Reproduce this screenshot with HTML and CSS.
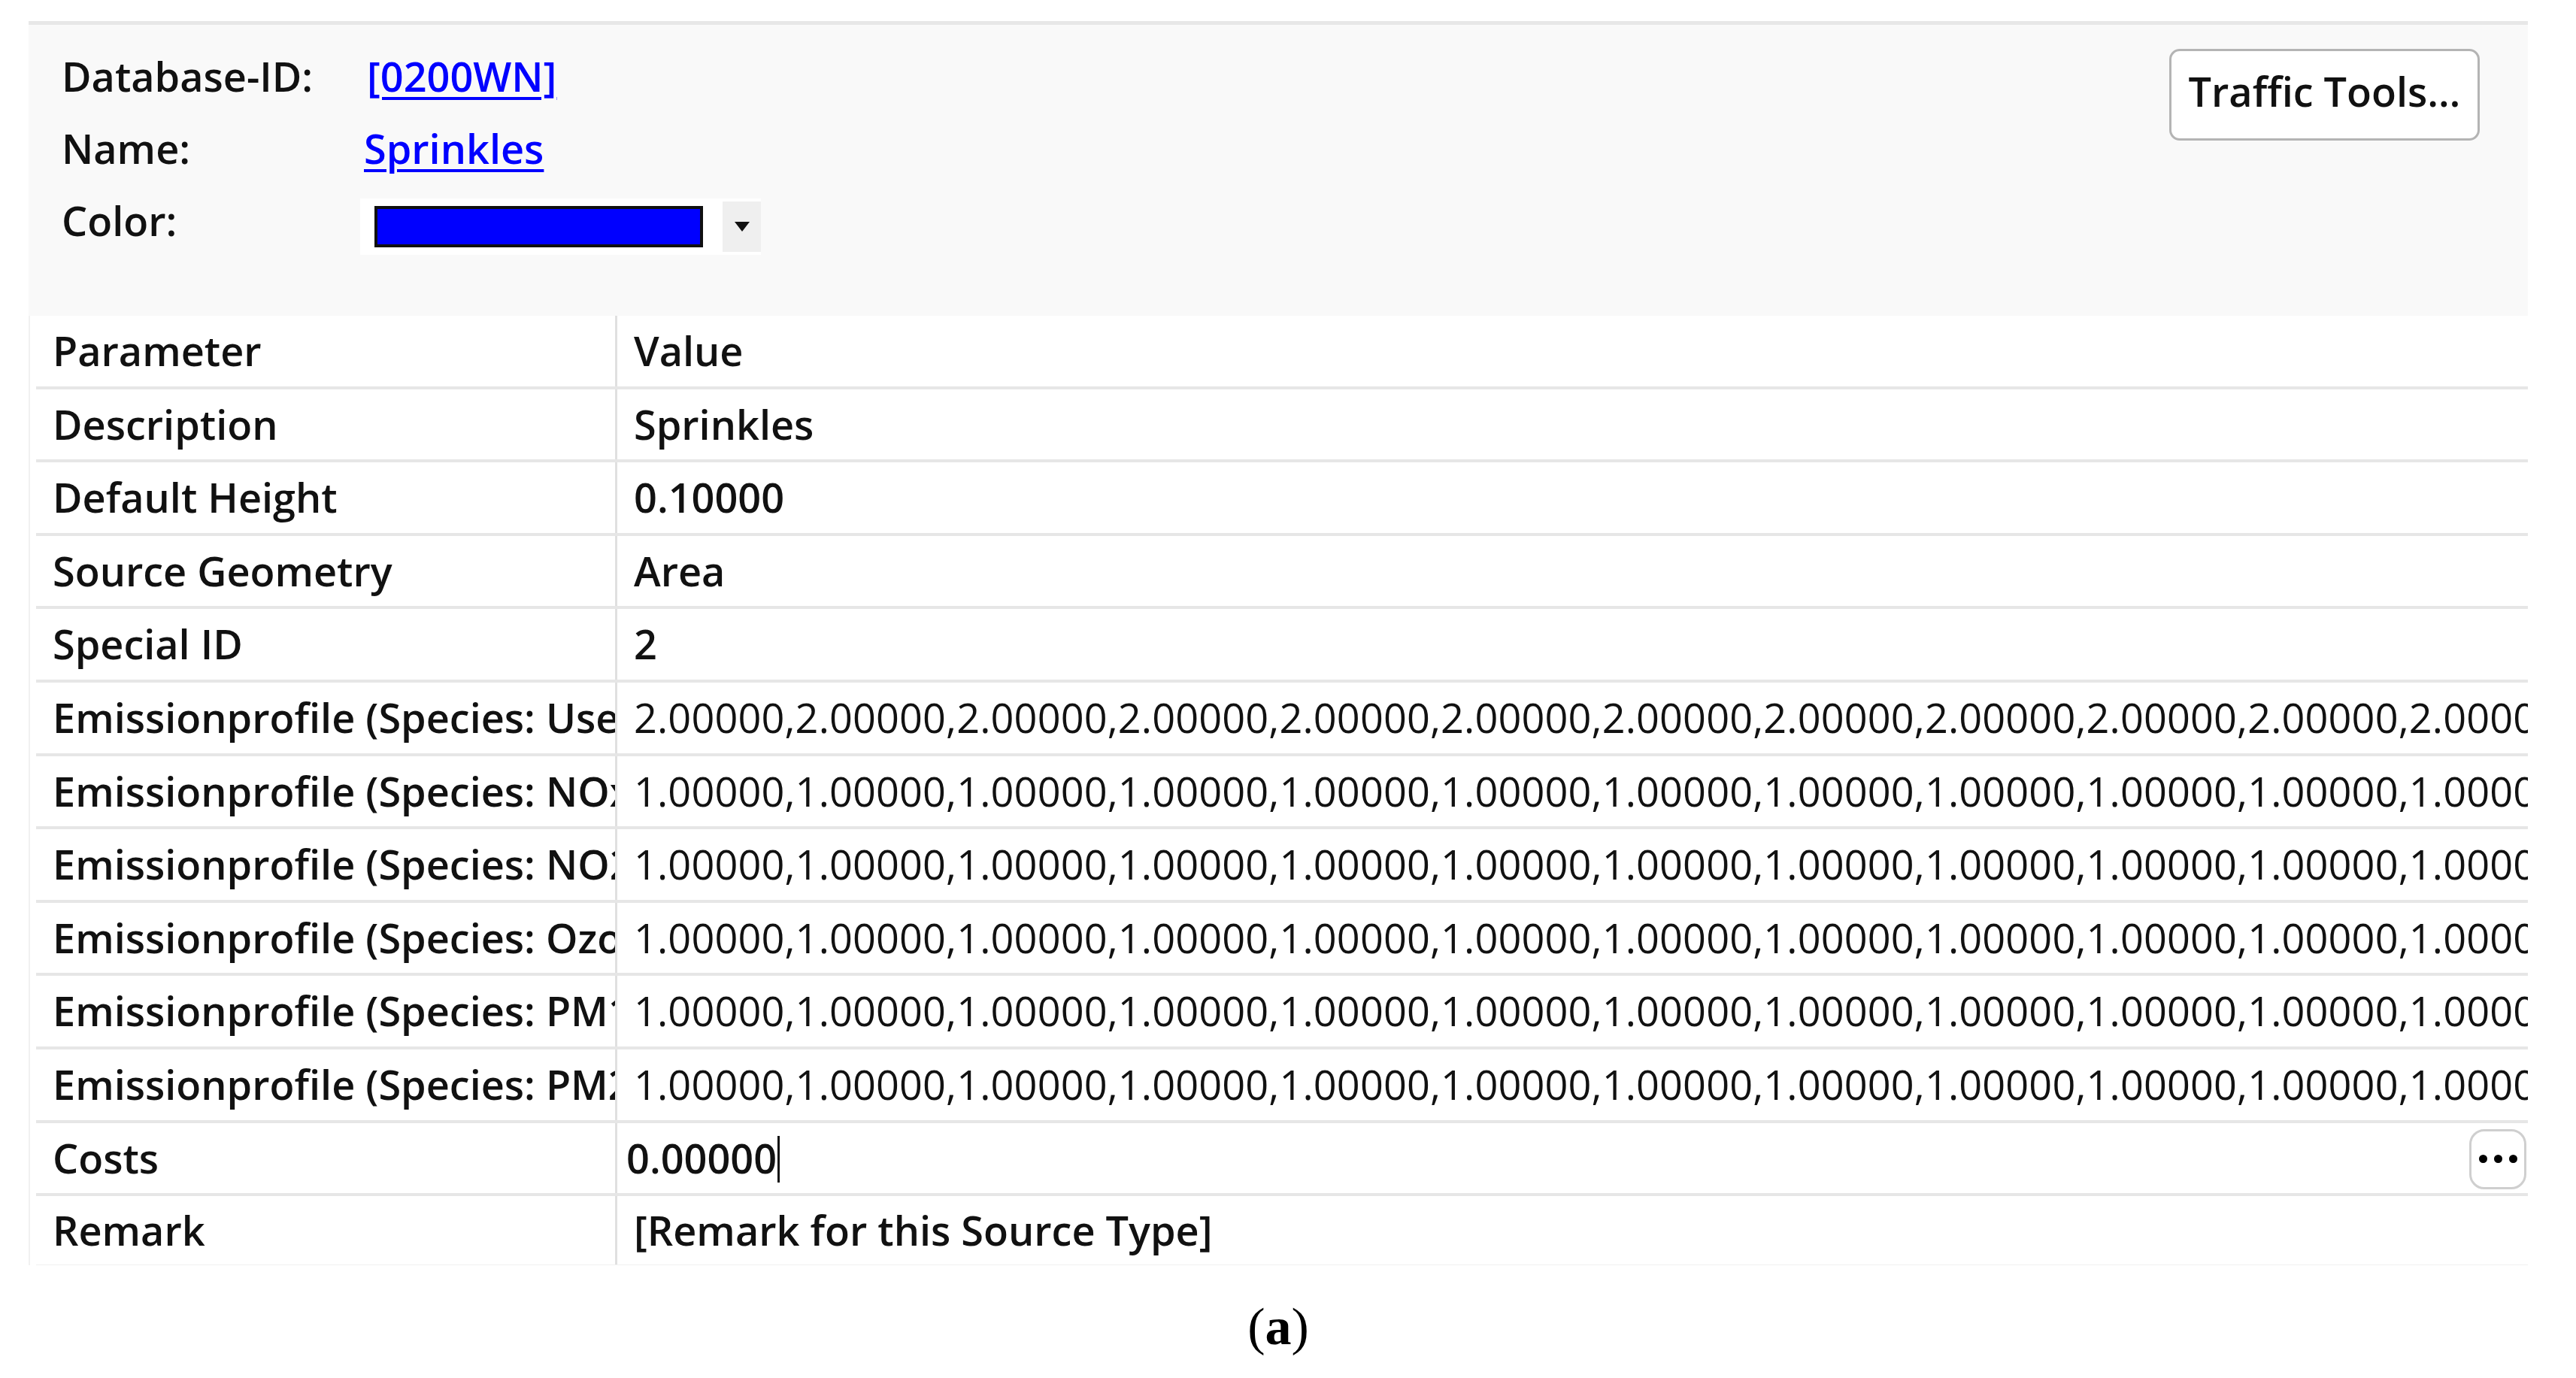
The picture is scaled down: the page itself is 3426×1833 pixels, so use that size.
FILE: index.html
```html
<!DOCTYPE html>
<html lang="en">
<head>
<meta charset="utf-8">
<title>Source Type</title>
<link rel="stylesheet" href="styles.css">
</head>
<body>
<div class="figure">
  <div class="panel">
    <div class="info">
      <div class="info-label">Database-ID:</div>
      <div class="info-value"><a class="link" href="#">[0200WN]</a></div>
      <div class="info-label">Name:</div>
      <div class="info-value"><a class="link link-name" href="#">Sprinkles</a></div>
      <div class="info-label">Color:</div>
      <div class="info-value">
        <div class="color-box">
          <div class="swatch"></div>
          <div class="drop">
            <svg width="20" height="13" viewBox="0 0 20 13"><path d="M0 0 H20 L10 13 Z" fill="#111"/></svg>
          </div>
        </div>
      </div>
    </div>
    <button class="traffic">Traffic Tools…</button>
  </div>

  <div class="table">
    <div class="row"><div class="key">Parameter</div><div class="val">Value</div></div>
    <div class="row"><div class="key">Description</div><div class="val">Sprinkles</div></div>
    <div class="row"><div class="key">Default Height</div><div class="val">0.10000</div></div>
    <div class="row"><div class="key">Source Geometry</div><div class="val">Area</div></div>
    <div class="row"><div class="key">Special ID</div><div class="val">2</div></div>
    <div class="row"><div class="key">Emissionprofile (Species: User defined)</div><div class="val num">2.00000,2.00000,2.00000,2.00000,2.00000,2.00000,2.00000,2.00000,2.00000,2.00000,2.00000,2.00000,2.00000,2.00000,2.00000,2.00000,2.00000,2.00000,2.00000,2.00000,2.00000,2.00000,2.00000,2.00000</div></div>
    <div class="row"><div class="key">Emissionprofile (Species: NOx)</div><div class="val num">1.00000,1.00000,1.00000,1.00000,1.00000,1.00000,1.00000,1.00000,1.00000,1.00000,1.00000,1.00000,1.00000,1.00000,1.00000,1.00000,1.00000,1.00000,1.00000,1.00000,1.00000,1.00000,1.00000,1.00000</div></div>
    <div class="row"><div class="key">Emissionprofile (Species: NO2)</div><div class="val num">1.00000,1.00000,1.00000,1.00000,1.00000,1.00000,1.00000,1.00000,1.00000,1.00000,1.00000,1.00000,1.00000,1.00000,1.00000,1.00000,1.00000,1.00000,1.00000,1.00000,1.00000,1.00000,1.00000,1.00000</div></div>
    <div class="row"><div class="key">Emissionprofile (Species: Ozone)</div><div class="val num">1.00000,1.00000,1.00000,1.00000,1.00000,1.00000,1.00000,1.00000,1.00000,1.00000,1.00000,1.00000,1.00000,1.00000,1.00000,1.00000,1.00000,1.00000,1.00000,1.00000,1.00000,1.00000,1.00000,1.00000</div></div>
    <div class="row"><div class="key">Emissionprofile (Species: PM10)</div><div class="val num">1.00000,1.00000,1.00000,1.00000,1.00000,1.00000,1.00000,1.00000,1.00000,1.00000,1.00000,1.00000,1.00000,1.00000,1.00000,1.00000,1.00000,1.00000,1.00000,1.00000,1.00000,1.00000,1.00000,1.00000</div></div>
    <div class="row"><div class="key">Emissionprofile (Species: PM2.5)</div><div class="val num">1.00000,1.00000,1.00000,1.00000,1.00000,1.00000,1.00000,1.00000,1.00000,1.00000,1.00000,1.00000,1.00000,1.00000,1.00000,1.00000,1.00000,1.00000,1.00000,1.00000,1.00000,1.00000,1.00000,1.00000</div></div>
    <div class="row"><div class="key">Costs</div><div class="val edit"><span class="edit-text">0.00000</span><span class="caret"></span><span class="dots-btn"><span class="dot"></span><span class="dot"></span><span class="dot"></span></span></div></div>
    <div class="row last"><div class="key">Remark</div><div class="val">[Remark for this Source Type]</div></div>
  </div>
</div>
<div class="caption">(<b>a</b>)</div>
</body>
</html>
```

FILE: styles.css
```css
html, body {
  margin: 0;
  padding: 0;
  background: #ffffff;
}

body {
  font-family: "Open Sans", "Noto Sans", sans-serif;
  color: #111111;
}

.figure {
  margin-left: 38px;
  width: 3324px;
  padding-top: 28px;
}

/* ---------- header panel ---------- */
.panel {
  box-sizing: border-box;
  height: 392px;
  border-top: 5px solid #e7e7e7;
  background: #f9f9f9;
  display: flex;
  justify-content: space-between;
  align-items: flex-start;
  padding: 20px 64px 0 44px;
}

.info {
  display: grid;
  grid-template-columns: 406px auto;
  grid-auto-rows: 96px;
  font-size: 54px;
  font-weight: 600;
  line-height: 96px;
}

.info-label {
  white-space: nowrap;
}

.info-value {
  white-space: nowrap;
}

.link {
  color: #0000ff;
  text-decoration: underline;
  text-decoration-thickness: 4px;
  text-underline-offset: 7px;
}

.link-name {
  margin-left: -4px;
}

.color-box {
  margin-top: 19px;
  margin-left: -9px;
  width: 533px;
  height: 75px;
  background: #ffffff;
  display: flex;
  align-items: center;
  box-sizing: border-box;
  padding-left: 19px;
}

.swatch {
  box-sizing: border-box;
  width: 437px;
  height: 55px;
  background: #0000ff;
  border: 4px solid #101010;
}

.drop {
  margin-left: 26px;
  width: 51px;
  height: 67px;
  background: #efefef;
  display: flex;
  align-items: center;
  justify-content: center;
}

.drop svg {
  display: block;
}

.traffic {
  margin-top: 12px;
  box-sizing: border-box;
  width: 413px;
  height: 122px;
  background: #ffffff;
  border: 3px solid #b4b4b4;
  border-radius: 14px;
  font-family: "Open Sans", "Noto Sans", sans-serif;
  font-size: 54px;
  font-weight: 600;
  color: #111111;
  padding: 0 0 10px 0;
  line-height: 1.2;
}

/* ---------- property table ---------- */
.table {
  border-left: 2px solid #f1f1f1;
  padding-left: 8px;
  background: #ffffff;
  font-size: 54px;
  font-weight: 600;
}

.row {
  box-sizing: border-box;
  height: 97.6px;
  display: grid;
  grid-template-columns: 773px 1fr;
  border-bottom: 4px solid #e6e6e6;
  line-height: 93.6px;
  white-space: nowrap;
}

.row.last {
  height: 92px;
  line-height: 91px;
  border-bottom: 1px solid #f0f0f0;
}

.key {
  box-sizing: border-box;
  padding-left: 22px;
  border-right: 3px solid #e0e0e0;
  overflow: hidden;
}

.val {
  padding-left: 22px;
  overflow: hidden;
}

.num {
  font-weight: 500;
  letter-spacing: 0.15px;
}

.edit {
  padding-left: 12px;
  display: flex;
  align-items: center;
  position: relative;
}

.edit-text {
  line-height: 93.6px;
}

.caret {
  width: 3px;
  height: 62px;
  background: #111111;
  margin-left: 1px;
  margin-top: 4px;
}

.dots-btn {
  position: absolute;
  right: 2px;
  top: 8px;
  box-sizing: border-box;
  width: 76px;
  height: 80px;
  border: 3px solid #cfcfcf;
  border-radius: 20px;
  background: #ffffff;
  display: flex;
  align-items: center;
  justify-content: center;
  gap: 9px;
}

.dot {
  width: 11px;
  height: 11px;
  border-radius: 50%;
  background: #000000;
}

/* ---------- caption ---------- */
.caption {
  margin-top: 32px;
  padding-right: 26px;
  text-align: center;
  font-family: "Liberation Serif", "Times New Roman", serif;
  font-size: 70px;
  line-height: 100px;
  color: #000000;
}

.caption b {
  font-weight: bold;
}
```
